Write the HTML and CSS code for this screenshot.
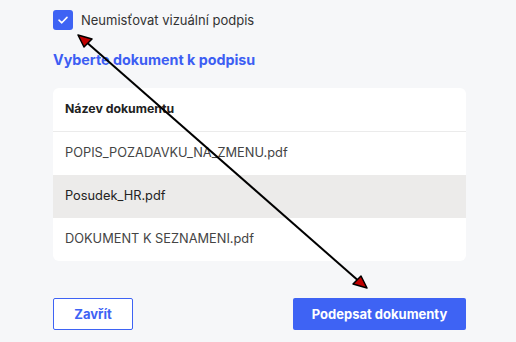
FILE: index.html
```html
<!DOCTYPE html>
<html>
<head>
<meta charset="utf-8">
<link rel="stylesheet" href="styles.css">
</head>
<body>
<div class="page">
  <label class="check">
    <span class="box"><svg width="12" height="10" viewBox="0 0 12 10"><path d="M2 5.2 L4.8 7.8 L10 2.4" fill="none" stroke="#fff" stroke-width="1.6" stroke-linecap="round" stroke-linejoin="round"/></svg></span>
    <span class="check-label">Neumisťovat vizuální podpis</span>
  </label>
  <h2 class="title">Vyberte dokument k podpisu</h2>
  <div class="card">
    <div class="row head">Název dokumentu</div>
    <div class="row">POPIS_POZADAVKU_NA_ZMENU.pdf</div>
    <div class="row sel">Posudek_HR.pdf</div>
    <div class="row">DOKUMENT K SEZNAMENI.pdf</div>
  </div>
  <div class="actions">
    <button class="btn outline">Zavřít</button>
    <button class="btn primary">Podepsat dokumenty</button>
  </div>
</div>
<svg class="arrow" width="516" height="342" viewBox="0 0 516 342">
  <line x1="84" y1="40" x2="361" y2="283" stroke="#000" stroke-width="2"/>
  <polygon points="78,35 92,39 84,47" fill="#c00000" stroke="#000" stroke-width="1.5" stroke-linejoin="round"/>
  <polygon points="367,288 353,284 361,276" fill="#c00000" stroke="#000" stroke-width="1.5" stroke-linejoin="round"/>
</svg>
</body>
</html>
```
FILE: styles.css
```css
html, body {
  margin: 0;
  padding: 0;
  background: #f6f7f9;
  font-family: Inter, "Liberation Sans", sans-serif;
}
.page {
  width: 413px;
  padding: 10px 0 0 53px;
}
.check {
  display: flex;
  align-items: center;
  gap: 8px;
  height: 20px;
}
.box {
  width: 20px;
  height: 20px;
  border-radius: 3px;
  background: #3e63f4;
  display: flex;
  align-items: center;
  justify-content: center;
}
.check-label {
  font-size: 13px;
  color: #333;
}
.title {
  margin: 21px 0 0 0;
  font-size: 14.3px;
  line-height: 18px;
  font-weight: 700;
  color: #3d5ef3;
}
.card {
  margin-top: 19px;
  background: #fff;
  border-radius: 6px;
  overflow: hidden;
  height: 173px;
}
.row {
  box-sizing: border-box;
  height: 43px;
  display: flex;
  align-items: center;
  padding: 0 0 2px 12px;
  font-size: 12.8px;
  color: #444;
}
.row.head {
  height: 44px;
  font-weight: 700;
  color: #222;
  font-size: 12.3px;
  border-bottom: 1px solid #ebebeb;
}
.row.sel {
  background: #ecebea;
  color: #222;
}
.actions {
  margin-top: 37px;
  display: flex;
  justify-content: space-between;
}
.btn {
  font-family: inherit;
  font-weight: 700;
  font-size: 13px;
  height: 32px;
  border-radius: 2px;
  cursor: pointer;
}
.btn.outline {
  width: 80px;
  background: #fff;
  border: 1px solid #3e63f4;
  color: #3e63f4;
}
.btn.primary {
  width: 173px;
  background: #3e63f4;
  border: none;
  color: #fff;
}
.arrow {
  position: absolute;
  left: 0;
  top: 0;
  pointer-events: none;
}
```
